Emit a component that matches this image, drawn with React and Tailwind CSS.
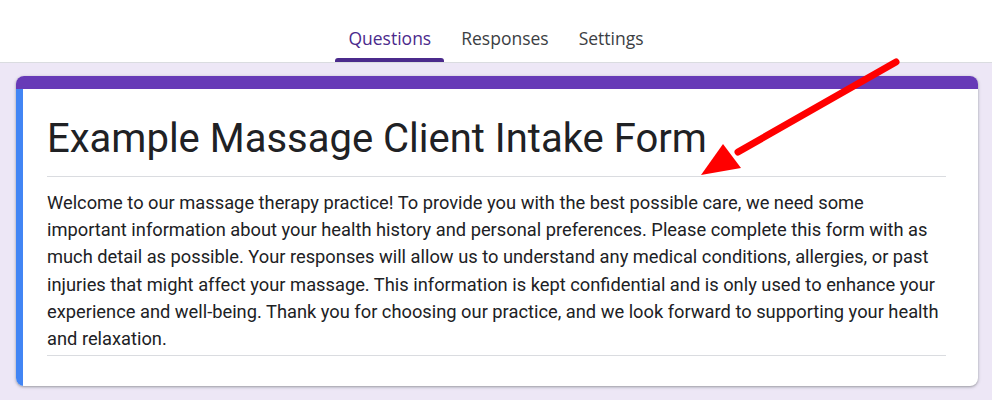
import React from "react";

const tabs = ["Questions", "Responses", "Settings"];

const Arrow = () => (
  <svg
    className="absolute left-0 top-0 pointer-events-none"
    width="992"
    height="400"
    viewBox="0 0 992 400"
  >
    <line x1="896" y1="62" x2="738" y2="152" stroke="#ff0000" strokeWidth="7" strokeLinecap="round" />
    <polygon points="701,175 723,144 741,168" fill="#ff0000" />
  </svg>
);

export default function App() {
  return (
    <div className="relative w-[992px] h-[400px] overflow-hidden bg-[#ede7f6] font-['Roboto',sans-serif]">
      {/* Tabs header */}
      <div className="h-[63px] bg-white border-b border-[#dadce0] flex justify-center items-end gap-[4px]">
        {tabs.map((tab, i) => (
          <div key={tab} className="relative px-[13px] h-full flex items-center pt-[15px]">
            <span
              className={`text-[17.5px] font-medium font-['Open_Sans',sans-serif] ${
                i === 0 ? "text-[#4b2a8c]" : "text-[#3c4043]"
              }`}
            >
              {tab}
            </span>
            {i === 0 && (
              <div className="absolute left-0 right-0 bottom-0 h-[4px] rounded-t-[3px] bg-[#4b2a8c]" />
            )}
          </div>
        ))}
      </div>

      {/* Form header card */}
      <div className="ml-4 mr-[14px] mt-[13px] bg-white rounded-lg overflow-hidden shadow-[0_1px_2px_rgba(60,64,67,0.3),0_1px_3px_1px_rgba(60,64,67,0.15)]">
        <div className="h-[13px] bg-[#673ab7]" />
        <div className="flex">
          <div className="w-[7px] bg-[#4285f4]" />
          <div className="flex-1 pl-[24px] pr-[32px] pt-[24px] pb-[30px]">
            <h1 className="text-[40px] leading-[52px] text-[#202124] pb-[11px] border-b border-[#dadce0]">
              Example Massage Client Intake Form
            </h1>
            <p className="mt-[12px] pb-[3px] text-[18.3px] leading-[27.2px] text-[#202124] border-b border-[#dadce0]">
              Welcome to our massage therapy practice! To provide you with the best possible care, we need some
              important information about your health history and personal preferences. Please complete this form with
              as much detail as possible. Your responses will allow us to understand any medical conditions,
              allergies, or past injuries that might affect your massage. This information is kept confidential and is
              only used to enhance your experience and well-being. Thank you for choosing our practice, and we look
              forward to supporting your health and relaxation.
            </p>
          </div>
        </div>
      </div>

      <Arrow />
    </div>
  );
}
